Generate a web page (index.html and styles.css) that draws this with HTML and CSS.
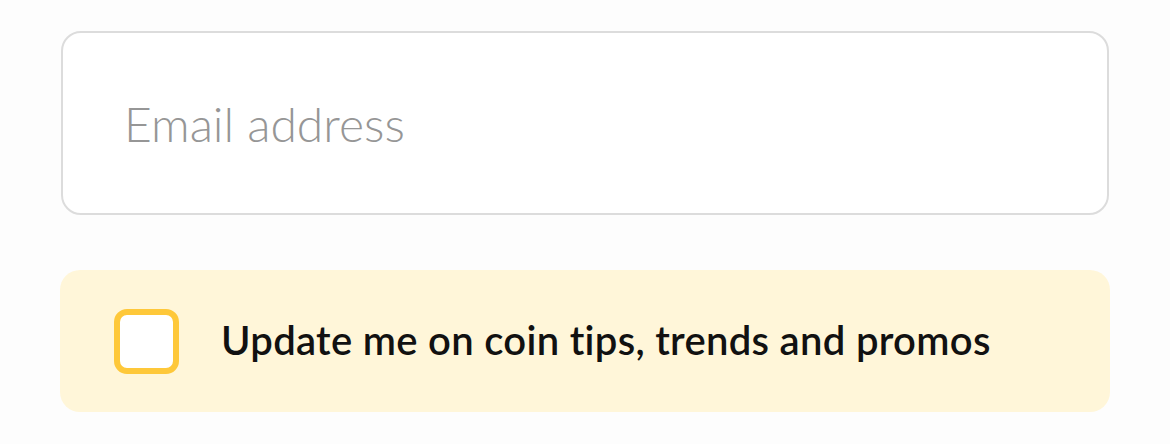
FILE: index.html
```html
<!DOCTYPE html>
<html>
  <head>
    <meta charset="UTF-8">
    <title>Subscribe</title>
    <link rel="stylesheet" href="styles.css">
  </head>
  <body>
    <form class="signup">
      <input type="email" class="email-input" placeholder="Email address" />
      <label class="opt-in">
        <input type="checkbox" class="opt-in-box" />
        <span class="opt-in-text">Update me on coin tips, trends and promos</span>
      </label>
    </form>
  </body>
</html>
```

FILE: styles.css
```css
*
{
  box-sizing: border-box;
}

body
{
  margin: 0;
  padding: 31px 60px 0 60px;
  background: #fdfdfd;
  font-family: "Lato", "Inter", sans-serif;
}

.signup
{
  display: flex;
  flex-direction: column;
  gap: 55px;
}

.email-input
{
  height: 184px;
  margin: 0 0 0 1px;
  width: 1048px;
  padding: 0 0 0 61px;
  border: 2px solid #dcdcdc;
  border-radius: 20px;
  background: #ffffff;
  font-family: inherit;
  font-size: 48px;
  font-weight: 300;
  color: #222;
  outline: none;
}

.email-input::placeholder
{
  color: #969696;
}

.opt-in
{
  display: flex;
  align-items: center;
  height: 142px;
  padding-left: 54px;
  border-radius: 20px;
  background: #fff6d9;
}

.opt-in-box
{
  appearance: none;
  -webkit-appearance: none;
  margin: 0 42px 0 0;
  width: 65px;
  height: 65px;
  border: 6px solid #fec83a;
  border-radius: 13px;
  background: #ffffff;
}

.opt-in-text
{
  font-size: 40px;
  font-weight: 600;
  letter-spacing: 0.3px;
  color: #111111;
  padding-bottom: 3px;
}
```
